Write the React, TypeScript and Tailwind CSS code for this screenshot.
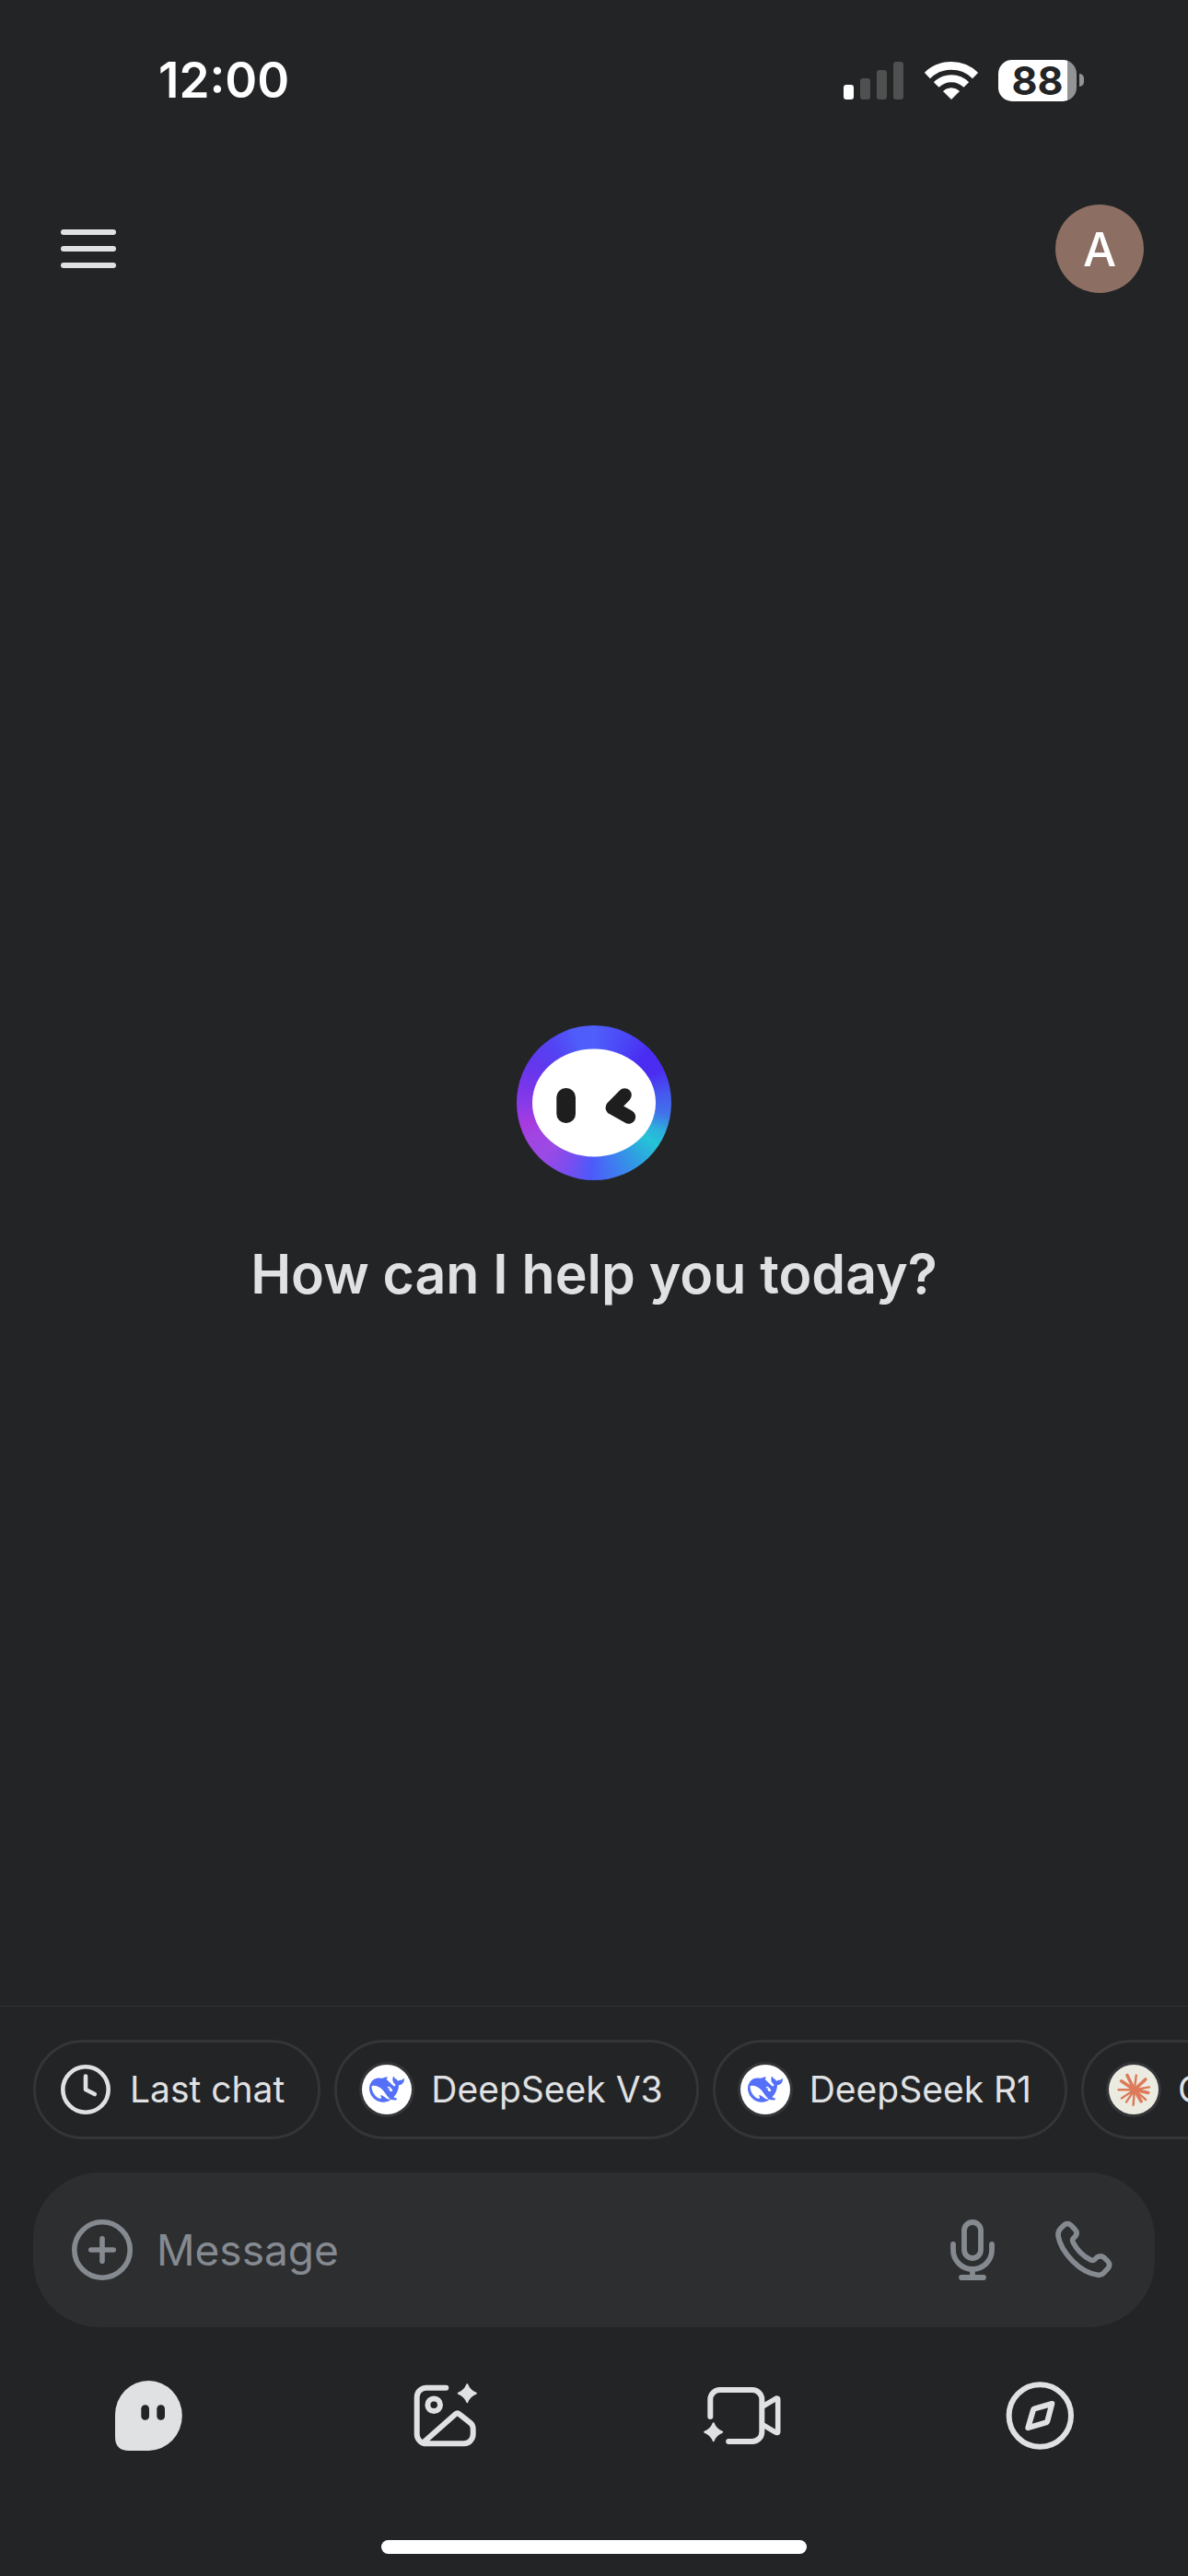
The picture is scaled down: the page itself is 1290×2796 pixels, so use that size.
import type { ReactNode } from "react";

const WHALE =
  "M23.748 4.482c-.254-.124-.364.113-.512.234-.051.039-.094.09-.137.136-.372.397-.806.657-1.373.626-.829-.046-1.537.214-2.163.848-.133-.782-.575-1.248-1.247-1.548-.352-.156-.708-.311-.955-.65-.172-.241-.219-.51-.305-.774-.055-.16-.11-.323-.293-.35-.2-.031-.278.136-.356.276-.313.572-.434 1.202-.422 1.84.027 1.436.633 2.58 1.838 3.393.137.093.172.187.129.323-.082.28-.18.552-.266.833-.055.179-.137.217-.329.14a5.526 5.526 0 01-1.736-1.18c-.857-.828-1.631-1.742-2.597-2.458a11.365 11.365 0 00-.689-.471c-.985-.957.13-1.743.388-1.836.27-.098.093-.432-.779-.428-.872.004-1.67.295-2.687.684a3.055 3.055 0 01-.465.137 9.597 9.597 0 00-2.883-.102c-1.885.21-3.39 1.102-4.497 2.623C.082 8.606-.231 10.684.152 12.85c.403 2.284 1.569 4.175 3.36 5.653 1.858 1.533 3.997 2.284 6.438 2.14 1.482-.085 3.133-.284 4.994-1.86.47.234.962.327 1.78.397.63.059 1.236-.03 1.705-.128.735-.156.684-.837.419-.961-2.155-1.004-1.682-.595-2.113-.926 1.096-1.296 2.746-2.642 3.392-7.003.05-.347.007-.565 0-.845-.004-.17.035-.237.23-.256a4.173 4.173 0 001.545-.475c1.396-.763 1.96-2.015 2.093-3.517.02-.23-.004-.467-.247-.588zM11.581 18c-2.089-1.642-3.102-2.183-3.52-2.16-.392.024-.321.471-.235.763.09.288.207.486.371.739.114.167.192.416-.113.603-.673.416-1.842-.14-1.897-.167-1.361-.802-2.5-1.86-3.301-3.307-.774-1.393-1.224-2.887-1.298-4.482-.02-.386.093-.522.477-.592a4.696 4.696 0 011.529-.039c2.132.312 3.946 1.265 5.468 2.774.868.86 1.525 1.887 2.202 2.891.72 1.066 1.494 2.082 2.48 2.914.348.292.625.514.891.677-.802.09-2.14.11-3.054-.614zm1-6.44a.306.306 0 01.415-.287.302.302 0 01.2.288.306.306 0 01-.31.307.303.303 0 01-.304-.308zm3.11 1.596c-.2.081-.399.151-.59.16a1.245 1.245 0 01-.798-.254c-.274-.23-.47-.358-.552-.758a1.73 1.73 0 01.016-.588c.07-.327-.008-.537-.239-.727-.187-.156-.426-.199-.688-.199a.559.559 0 01-.254-.078c-.11-.054-.2-.19-.114-.358.028-.054.16-.186.192-.21.356-.202.767-.136 1.146.016.352.144.618.408 1.001.782.391.451.462.576.685.914.176.265.336.537.445.848.067.195-.019.354-.25.452z";

function SignalIcon() {
  return (
    <svg className="h-[42px] w-[66px]" viewBox="0 0 66 42" aria-hidden="true">
      <rect x="0" y="26" width="11" height="16" rx="3" fill="#fff" />
      <rect x="18" y="19" width="11" height="23" rx="3" fill="#4f5150" />
      <rect x="36" y="10" width="11" height="32" rx="3" fill="#4f5150" />
      <rect x="54" y="1" width="11" height="41" rx="3" fill="#4f5150" />
    </svg>
  );
}

function WifiIcon() {
  return (
    <svg className="h-[44px] w-[58px]" viewBox="0 0 58 44" fill="none" stroke="#fff" aria-hidden="true">
      <path d="M2.9 17 A37.3 37.3 0 0 1 55.1 17" strokeWidth="8.8" />
      <path d="M12.7 27 A23 23 0 0 1 45.3 27" strokeWidth="8" />
      <path d="M29 42.5 L20.5 34 A13 13 0 0 1 37.5 34Z" fill="#fff" stroke="#fff" strokeWidth="1" strokeLinejoin="round" />
    </svg>
  );
}

function Battery() {
  return (
    <div className="flex items-center gap-[3px]">
      <div className="flex h-[45px] w-[85px] items-center justify-center rounded-[15px] bg-linear-to-r from-white from-[88%] to-[#929395] to-[88%] text-[43px] leading-none font-bold text-[#232426]">
        88
      </div>
      <div className="h-[14px] w-[5px] rounded-r-full bg-[#929395]" />
    </div>
  );
}

function BotLogo() {
  return (
    <div className="size-[168px] rounded-full bg-[conic-gradient(#4f5ffb_0deg,#4a45f6_28deg,#4a2bf2_48deg,#4b2df1_64deg,#4558ee_82deg,#4270ea_98deg,#2cb0dc_113deg,#24c4d6_124deg,#2fa0e2_142deg,#3f7df0_162deg,#4c5af9_182deg,#7a4df0_202deg,#9a4ae5_222deg,#a046e2_240deg,#a63bdf_253deg,#8a3be8_268deg,#7636ea_285deg,#6038ee_305deg,#5344f3_325deg,#4f5dfb_345deg,#4f5ffb_360deg)]">
      <svg className="size-full" viewBox="0 0 168 168" aria-hidden="true">
        <ellipse cx="84" cy="84" rx="67" ry="58.5" fill="#fff" />
        <rect x="43.3" y="68" width="20.7" height="38" rx="10" fill="#1e1e1e" />
        <path
          d="M117.3 75.7 L104 89.3 L121.7 99.3"
          fill="none"
          stroke="#1e1e1e"
          strokeWidth="15"
          strokeLinecap="round"
          strokeLinejoin="round"
        />
      </svg>
    </div>
  );
}

function ClockIcon() {
  return (
    <svg className="size-[54px]" viewBox="0 0 54 54" fill="none" stroke="#e0e1e3" strokeWidth="4.6" strokeLinecap="round" strokeLinejoin="round" aria-hidden="true">
      <circle cx="27" cy="27" r="24.7" />
      <path d="M27 12.5 V27 L36.8 32" />
    </svg>
  );
}

function DeepSeekIcon() {
  return (
    <span className="flex size-[54px] items-center justify-center rounded-full bg-white ring-[3px] ring-[#343538]">
      <svg className="size-[38px]" viewBox="0 0 24 24" fill="#5470f8" aria-hidden="true">
        <path d={WHALE} />
      </svg>
    </span>
  );
}

function ClaudeIcon() {
  return (
    <span className="flex size-[54px] rounded-full bg-[#ecebe1] ring-[3px] ring-[#343538]">
      <svg className="size-full" viewBox="0 0 54 54" fill="none" stroke="#dd7a5a" strokeLinecap="round" aria-hidden="true">
        <path
          strokeWidth="3.6"
          d="M27.8 27.3 L19.9 11.5 M27.8 27.3 L39.8 16 M27.8 27.3 L42.8 30.4 M27.8 27.3 L35.2 39.8 M27.8 27.3 L13.6 17.8"
        />
        <path
          strokeWidth="2.4"
          d="M27.8 27.3 L29.8 11.5 M27.8 27.3 L44 24.4 M27.8 27.3 L40.2 38 M27.8 27.3 L26.6 43.8 M27.8 27.3 L19 40.6 M27.8 27.3 L13.8 36.4 M27.8 27.3 L10.6 27.2"
        />
        <circle cx="27.8" cy="27.3" r="3.5" fill="#dd7a5a" />
      </svg>
    </span>
  );
}

function PlusCircleIcon() {
  return (
    <svg className="size-[66px]" viewBox="0 0 66 66" fill="none" stroke="currentColor" strokeWidth="5.6" strokeLinecap="round" aria-hidden="true">
      <circle cx="33" cy="33" r="30.2" />
      <path d="M33 20.8 V45.2 M20.8 33 H45.2" />
    </svg>
  );
}

function MicIcon() {
  return (
    <svg className="size-[72px]" viewBox="0 0 72 72" fill="none" stroke="currentColor" strokeWidth="5.8" strokeLinecap="round" aria-hidden="true">
      <rect x="27" y="6" width="18" height="39" rx="9" />
      <path d="M15 30 V36 A21 21 0 0 0 57 36 V30 M36 57 V66 M24 66 H48" />
    </svg>
  );
}

function PhoneIcon() {
  return (
    <svg className="size-[72px]" viewBox="0 0 72 72" fill="none" stroke="currentColor" strokeWidth="5.6" strokeLinejoin="round" aria-hidden="true">
      <path d="M11.5 13 L15.3 9.2 Q19 6 22.8 9.2 L27.3 13.8 Q30.5 17.3 28 21 L25.5 23.5 Q24 25 25 27.5 Q31.5 40.5 44.5 47 Q47 48 48.5 46.5 L51 44.2 Q55.3 41.5 59 44.5 L63 48.5 Q66.2 52.3 63.2 56 L58.5 61 Q56 63.8 52 63.3 Q38 61.5 25 48.5 Q11 34 9 20.5 Q8.6 16 11.5 13Z" />
    </svg>
  );
}

function ChatIcon() {
  return (
    <svg className="size-24" viewBox="0 0 96 96" aria-hidden="true">
      <path d="M12 47 A36.4 37 0 0 1 48.4 10 A36.4 38 0 0 1 48.4 86 H27 Q12 86 12 71Z" fill="#e0e1e3" />
      <rect x="40.3" y="36.3" width="8.7" height="16.4" rx="4.3" fill="#232426" />
      <rect x="57.3" y="36.3" width="8.7" height="16.4" rx="4.3" fill="#232426" />
    </svg>
  );
}

function ImageIcon() {
  return (
    <svg className="size-24" viewBox="0 0 96 96" fill="none" stroke="#e0e1e3" strokeWidth="6" strokeLinecap="round" strokeLinejoin="round" aria-hidden="true">
      <path d="M48.3 17.7 H27 A10.3 10.3 0 0 0 16.7 28 V68 A10.3 10.3 0 0 0 27 78.3 H67.5 A10.2 10.2 0 0 0 77.7 68 V62 Q77.7 58.2 74.5 55.6 L62.8 46.3 Q60.7 44.5 58.6 46.3 L25.5 75.5" />
      <circle cx="35.2" cy="36.3" r="6.8" />
      <path
        d="M71.3 14.2 Q73.8 21.2 80.8 23.7 Q73.8 26.2 71.3 33.2 Q68.8 26.2 61.8 23.7 Q68.8 21.2 71.3 14.2Z"
        fill="#e0e1e3"
        strokeWidth="2"
      />
    </svg>
  );
}

function VideoIcon() {
  return (
    <svg className="size-24" viewBox="0 0 96 96" fill="none" stroke="#e0e1e3" strokeWidth="6" strokeLinecap="round" strokeLinejoin="round" aria-hidden="true">
      <path d="M13.3 49 V30.3 A10.3 10.3 0 0 1 23.6 20 H59 A10.3 10.3 0 0 1 69.3 30.3 V65.7 A10.3 10.3 0 0 1 59 76 H33.2" />
      <path d="M70 38 L83.8 29.8 Q86.7 28.2 86.7 30.5 V65.2 Q86.7 67.4 83.8 65.8 L70 57.6" strokeWidth="5.6" />
      <path
        d="M16.7 56.2 Q19.2 63.2 26.2 65.7 Q19.2 68.2 16.7 75.2 Q14.2 68.2 7.2 65.7 Q14.2 63.2 16.7 56.2Z"
        fill="#e0e1e3"
        strokeWidth="2"
      />
    </svg>
  );
}

function CompassIcon() {
  return (
    <svg className="size-24" viewBox="0 0 96 96" fill="none" stroke="#e0e1e3" strokeWidth="6" strokeLinejoin="round" aria-hidden="true">
      <circle cx="48.3" cy="48" r="33.7" />
      <path d="M61.3 35 L42.5 40.3 Q41.3 40.7 40.9 42 L35.3 61.2 L55 55.4 Q56 55 56.3 54Z" />
    </svg>
  );
}

function Chip({ icon, label }: { icon: ReactNode; label: string }) {
  return (
    <button
      type="button"
      className="flex h-[108px] shrink-0 items-center gap-[21px] rounded-full border-[3px] border-[#343538] pr-9 pl-[27px] text-[39px] leading-[48px] whitespace-nowrap text-[#e0e1e3]"
    >
      {icon}
      {label}
    </button>
  );
}

const chips = [
  { label: "Last chat", icon: <ClockIcon /> },
  { label: "DeepSeek V3", icon: <DeepSeekIcon /> },
  { label: "DeepSeek R1", icon: <DeepSeekIcon /> },
  { label: "Claude", icon: <ClaudeIcon /> },
];

const tabs = [
  { label: "Chat", icon: <ChatIcon /> },
  { label: "Images", icon: <ImageIcon /> },
  { label: "Videos", icon: <VideoIcon /> },
  { label: "Explore", icon: <CompassIcon /> },
];

export default function App() {
  return (
    <div className="flex min-h-screen flex-col overflow-x-hidden bg-[#232426] font-['Inter','Liberation_Sans',sans-serif] text-[#e0e1e3]">
      <div className="flex items-center justify-between pt-[54px] pr-[113px] pl-[172px] text-white">
        <time className="text-[53px] leading-[66px] font-semibold">12:00</time>
        <div className="flex items-center gap-[22px]">
          <SignalIcon />
          <WifiIcon />
          <Battery />
        </div>
      </div>

      <header className="flex items-center justify-between px-12 pt-[102px] pb-9">
        <button type="button" aria-label="Open menu" className="flex size-24 items-center justify-center">
          <span className="flex w-[60px] flex-col gap-3">
            <span className="h-[6px] rounded-full bg-[#e0e1e3]" />
            <span className="h-[6px] rounded-full bg-[#e0e1e3]" />
            <span className="h-[6px] rounded-full bg-[#e0e1e3]" />
          </span>
        </button>
        <button
          type="button"
          className="flex size-24 items-center justify-center rounded-full bg-[#8d6e63] text-[51px] leading-none font-medium text-white"
        >
          A
        </button>
      </header>

      <main className="flex grow flex-col items-center justify-center gap-[66px]">
        <BotLogo />
        <h1 className="text-center text-[59px] leading-[72px] font-semibold">How can I help you today?</h1>
      </main>

      <footer className="flex flex-col border-t border-[#313234] pt-9">
        <div className="flex gap-[15px] overflow-x-auto px-9 [scrollbar-width:none]">
          {chips.map((chip) => (
            <Chip key={chip.label} icon={chip.icon} label={chip.label} />
          ))}
        </div>

        <form className="mx-9 mt-9 flex h-[168px] items-center rounded-[72px] bg-[#2d2e30] pr-[42px] pl-[42px] text-[#858a91]">
          <button type="button" aria-label="Add attachment">
            <PlusCircleIcon />
          </button>
          <input
            type="text"
            aria-label="Message"
            placeholder="Message"
            className="ml-[26px] min-w-0 grow bg-transparent text-[46px] leading-[60px] outline-none placeholder:text-[#858a91]"
          />
          <div className="flex gap-12">
            <button type="button" aria-label="Dictate">
              <MicIcon />
            </button>
            <button type="button" aria-label="Call">
              <PhoneIcon />
            </button>
          </div>
        </form>

        <nav className="grid grid-cols-4 justify-items-center pt-12">
          {tabs.map((tab) => (
            <button key={tab.label} type="button" aria-label={tab.label}>
              {tab.icon}
            </button>
          ))}
        </nav>

        <div className="mx-auto mt-[87px] mb-6 h-[15px] w-[462px] rounded-full bg-white" />
      </footer>
    </div>
  );
}
